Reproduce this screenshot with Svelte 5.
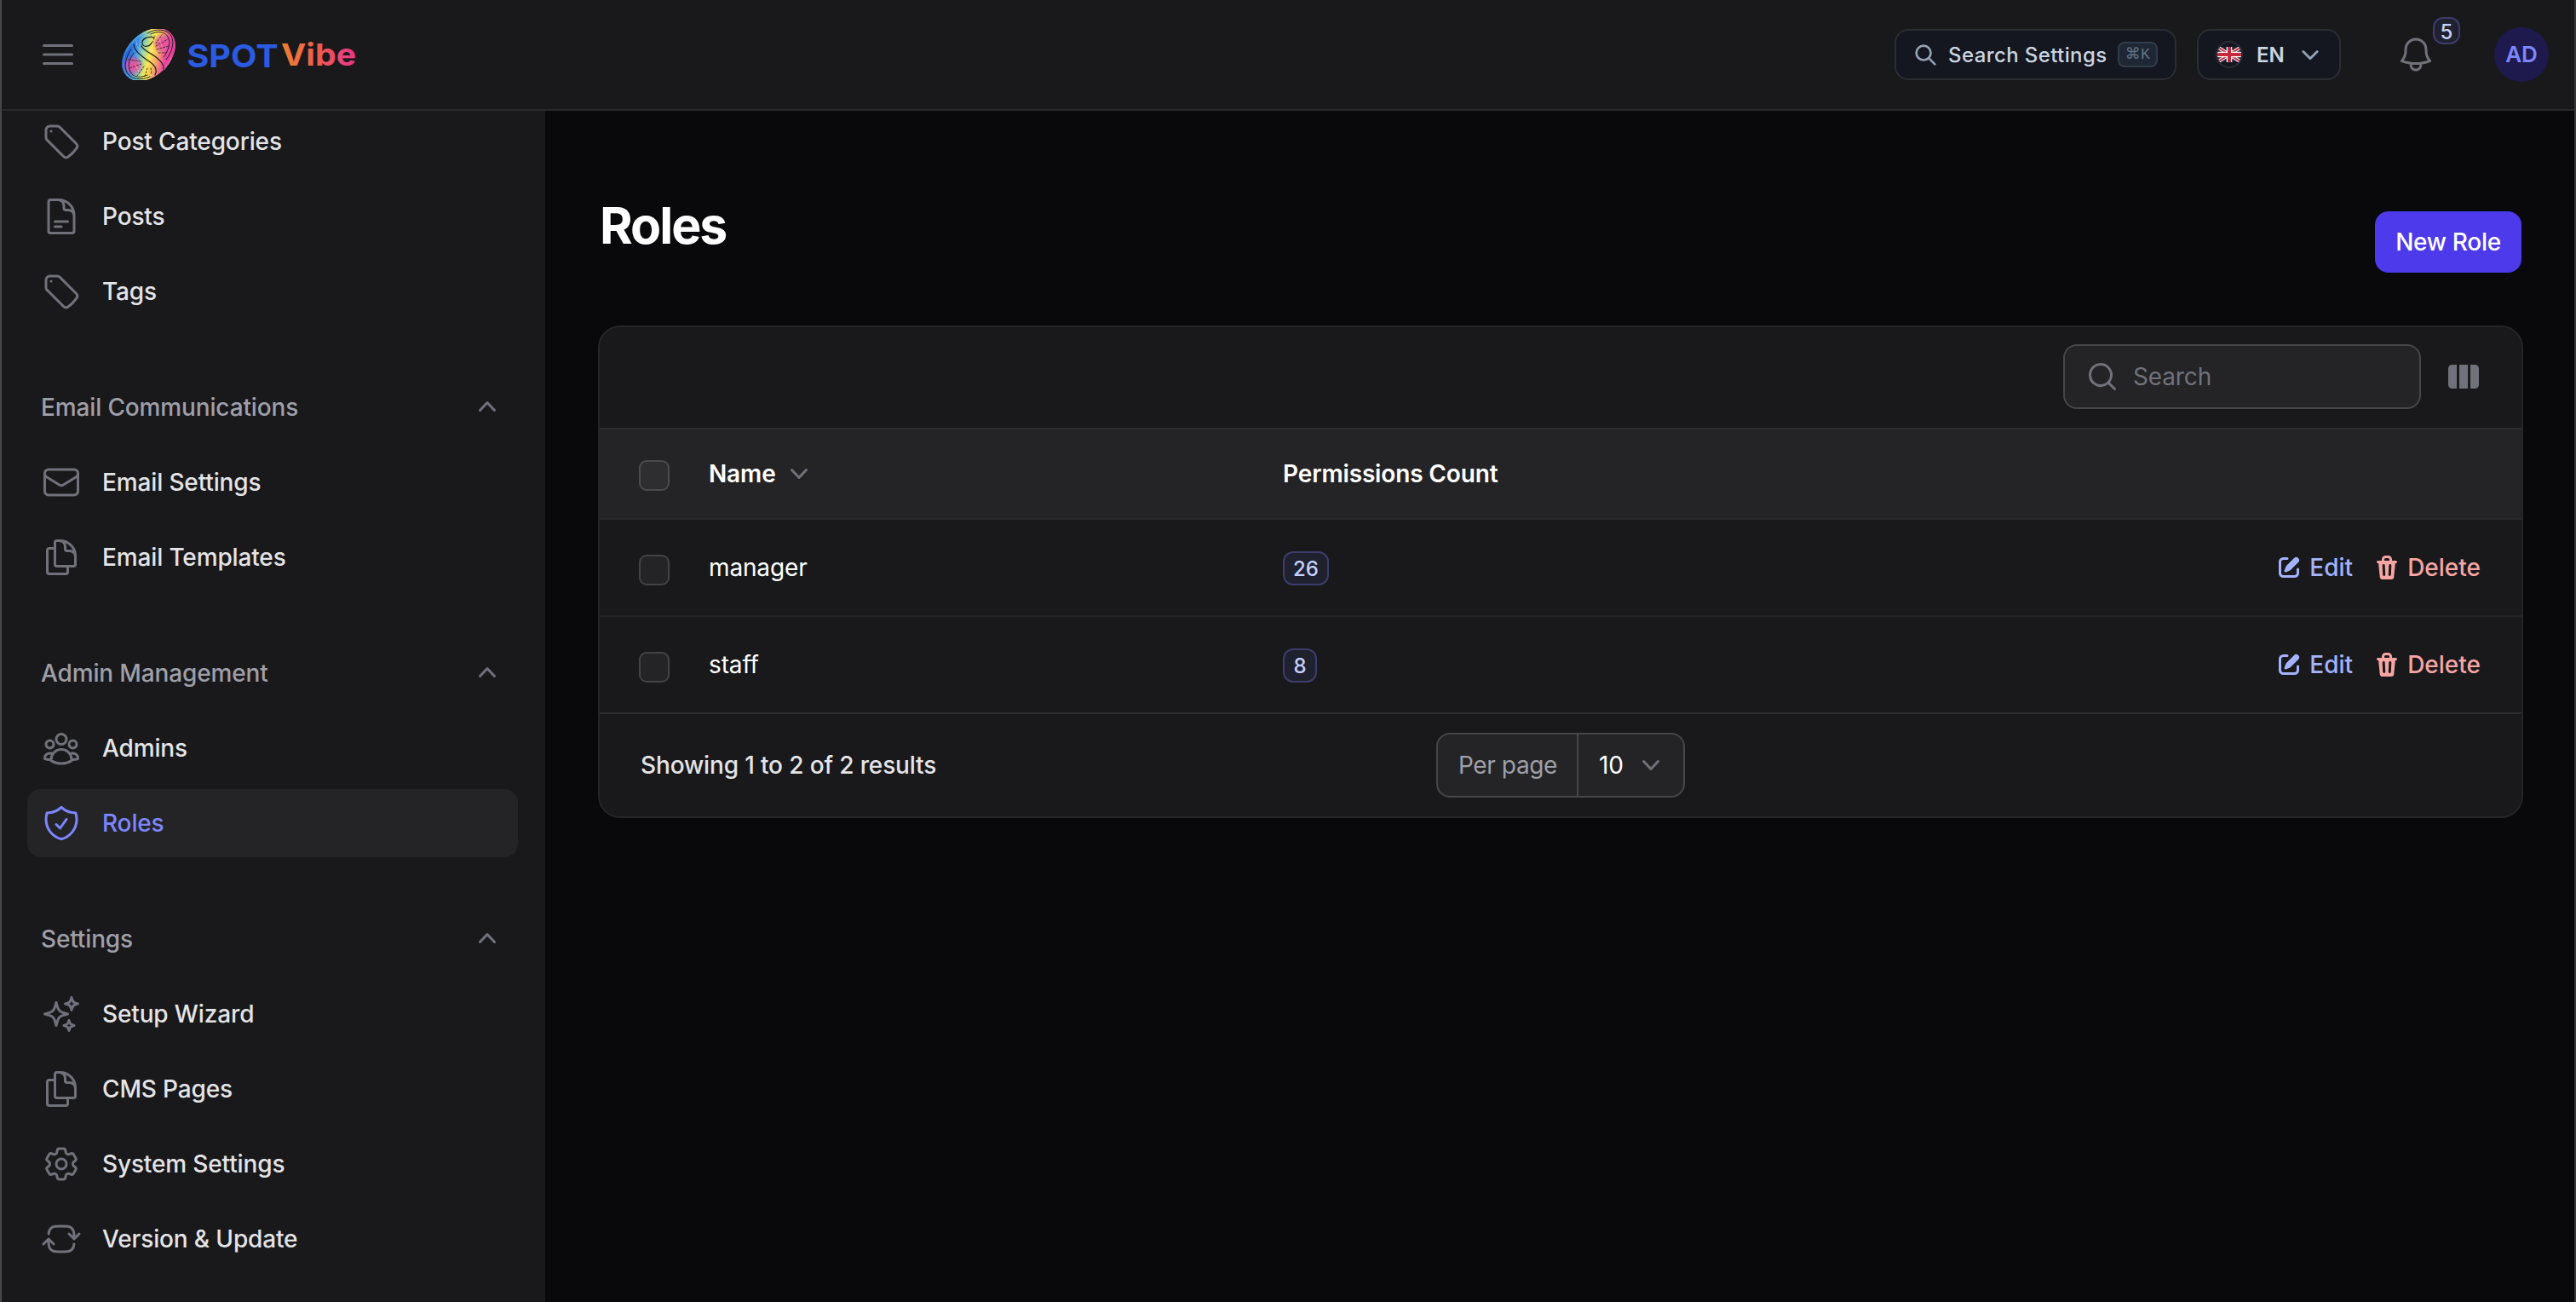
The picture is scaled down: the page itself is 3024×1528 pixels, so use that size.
<script lang="ts">
    const paths: Record<string, string[]> = {
        tag: [
            'M9.568 3H5.25A2.25 2.25 0 0 0 3 5.25v4.318c0 .597.237 1.17.659 1.591l9.581 9.581c.699.699 1.78.872 2.607.33a18.095 18.095 0 0 0 5.223-5.223c.542-.827.369-1.908-.33-2.607L11.16 3.66A2.25 2.25 0 0 0 9.568 3Z',
            'M6 6h.008v.008H6V6Z'
        ],
        document: [
            'M19.5 14.25v-2.625a3.375 3.375 0 0 0-3.375-3.375h-1.5A1.125 1.125 0 0 1 13.5 7.125v-1.5a3.375 3.375 0 0 0-3.375-3.375H8.25m0 12.75h7.5m-7.5 3H12M10.5 2.25H5.625c-.621 0-1.125.504-1.125 1.125v17.25c0 .621.504 1.125 1.125 1.125h12.75c.621 0 1.125-.504 1.125-1.125V11.25a9 9 0 0 0-9-9Z'
        ],
        envelope: [
            'M21.75 6.75v10.5a2.25 2.25 0 0 1-2.25 2.25h-15a2.25 2.25 0 0 1-2.25-2.25V6.75m19.5 0A2.25 2.25 0 0 0 19.5 4.5h-15a2.25 2.25 0 0 0-2.25 2.25m19.5 0v.243a2.25 2.25 0 0 1-1.07 1.916l-7.5 4.615a2.25 2.25 0 0 1-2.36 0L3.32 8.91a2.25 2.25 0 0 1-1.07-1.916V6.75'
        ],
        copy: [
            'M15.75 17.25v3.375c0 .621-.504 1.125-1.125 1.125h-9.75a1.125 1.125 0 0 1-1.125-1.125V7.875c0-.621.504-1.125 1.125-1.125H6.75a9.06 9.06 0 0 1 1.5.124m7.5 10.376h3.375c.621 0 1.125-.504 1.125-1.125V11.25c0-4.46-3.243-8.161-7.5-8.876a9.06 9.06 0 0 0-1.5-.124H9.375c-.621 0-1.125.504-1.125 1.125v3.5m7.5 10.375H9.375a1.125 1.125 0 0 1-1.125-1.125v-9.25m12 6.625v-1.875a3.375 3.375 0 0 0-3.375-3.375h-1.5a1.125 1.125 0 0 1-1.125-1.125v-1.5a3.375 3.375 0 0 0-3.375-3.375H9.75'
        ],
        users: [
            'M18 18.72a9.094 9.094 0 0 0 3.741-.479 3 3 0 0 0-4.682-2.72m.94 3.198.001.031c0 .225-.012.447-.037.666A11.944 11.944 0 0 1 12 21c-2.17 0-4.207-.576-5.963-1.584A6.062 6.062 0 0 1 6 18.719m12 0a5.971 5.971 0 0 0-.941-3.197m0 0A5.995 5.995 0 0 0 12 12.75a5.995 5.995 0 0 0-5.058 2.772m0 0a3 3 0 0 0-4.681 2.72 8.986 8.986 0 0 0 3.74.477m.94-3.197a5.971 5.971 0 0 0-.94 3.197M15 6.75a3 3 0 1 1-6 0 3 3 0 0 1 6 0Zm6 3a2.25 2.25 0 1 1-4.5 0 2.25 2.25 0 0 1 4.5 0Zm-13.5 0a2.25 2.25 0 1 1-4.5 0 2.25 2.25 0 0 1 4.5 0Z'
        ],
        shield: [
            'M9 12.75 11.25 15 15 9.75m-3-7.036A11.959 11.959 0 0 1 3.598 6 11.99 11.99 0 0 0 3 9.749c0 5.592 3.824 10.29 9 11.623 5.176-1.332 9-6.03 9-11.622 0-1.31-.21-2.571-.598-3.751h-.152c-3.196 0-6.1-1.248-8.25-3.285Z'
        ],
        sparkles: [
            'M9.813 15.904 9 18.75l-.813-2.846a4.5 4.5 0 0 0-3.09-3.09L2.25 12l2.846-.813a4.5 4.5 0 0 0 3.09-3.09L9 5.25l.813 2.846a4.5 4.5 0 0 0 3.09 3.09L15.75 12l-2.846.813a4.5 4.5 0 0 0-3.09 3.09ZM18.259 8.715 18 9.75l-.259-1.035a3.375 3.375 0 0 0-2.455-2.456L14.25 6l1.036-.259a3.375 3.375 0 0 0 2.455-2.456L18 2.25l.259 1.035a3.375 3.375 0 0 0 2.456 2.456L21.75 6l-1.035.259a3.375 3.375 0 0 0-2.456 2.456ZM16.894 20.567 16.5 21.75l-.394-1.183a2.25 2.25 0 0 0-1.423-1.423L13.5 18.75l1.183-.394a2.25 2.25 0 0 0 1.423-1.423l.394-1.183.394 1.183a2.25 2.25 0 0 0 1.423 1.423l1.183.394-1.183.394a2.25 2.25 0 0 0-1.423 1.423Z'
        ],
        cog: [
            'M9.594 3.94c.09-.542.56-.94 1.11-.94h2.593c.55 0 1.02.398 1.11.94l.213 1.281c.063.374.313.686.645.87.074.04.147.083.22.127.325.196.72.257 1.075.124l1.217-.456a1.125 1.125 0 0 1 1.37.49l1.296 2.247a1.125 1.125 0 0 1-.26 1.431l-1.003.827c-.293.241-.438.613-.43.992a7.723 7.723 0 0 1 0 .255c-.008.378.137.75.43.991l1.004.827c.424.35.534.955.26 1.43l-1.298 2.247a1.125 1.125 0 0 1-1.369.491l-1.217-.456c-.355-.133-.75-.072-1.076.124a6.47 6.47 0 0 1-.22.128c-.331.183-.581.495-.644.869l-.213 1.281c-.09.543-.56.94-1.11.94h-2.594c-.55 0-1.019-.398-1.11-.94l-.213-1.281c-.062-.374-.312-.686-.644-.87a6.52 6.52 0 0 1-.22-.127c-.325-.196-.72-.257-1.076-.124l-1.217.456a1.125 1.125 0 0 1-1.369-.49l-1.297-2.247a1.125 1.125 0 0 1 .26-1.431l1.004-.827c.292-.24.437-.613.43-.991a6.932 6.932 0 0 1 0-.255c.007-.38-.138-.751-.43-.992l-1.004-.827a1.125 1.125 0 0 1-.26-1.43l1.297-2.247a1.125 1.125 0 0 1 1.37-.491l1.216.456c.356.133.751.072 1.076-.124.072-.044.146-.086.22-.128.332-.183.582-.495.644-.869l.214-1.28Z',
            'M15 12a3 3 0 1 1-6 0 3 3 0 0 1 6 0Z'
        ],
        refresh: [
            'M19.5 12c0-1.232-.046-2.453-.138-3.662a4.006 4.006 0 0 0-3.7-3.7 48.678 48.678 0 0 0-7.324 0 4.006 4.006 0 0 0-3.7 3.7c-.017.22-.032.441-.046.662M19.5 12l3-3m-3 3-3-3m-12 3c0 1.232.046 2.453.138 3.662a4.006 4.006 0 0 0 3.7 3.7 48.656 48.656 0 0 0 7.324 0 4.006 4.006 0 0 0 3.7-3.7c.017-.22.032-.441.046-.662M4.5 12l3 3m-3-3-3 3'
        ],
        bars: ['M3.75 6.75h16.5M3.75 12h16.5m-16.5 5.25h16.5'],
        bell: [
            'M14.857 17.082a23.848 23.848 0 0 0 5.454-1.31A8.967 8.967 0 0 1 18 9.75V9A6 6 0 0 0 6 9v.75a8.967 8.967 0 0 1-2.312 6.022c1.733.64 3.56 1.085 5.455 1.31m5.714 0a24.255 24.255 0 0 1-5.714 0m5.714 0a3 3 0 1 1-5.714 0'
        ]
    };

    const groups = [
        {
            label: '',
            items: [
                { label: 'Post Categories', icon: 'tag' },
                { label: 'Posts', icon: 'document' },
                { label: 'Tags', icon: 'tag' }
            ]
        },
        {
            label: 'Email Communications',
            items: [
                { label: 'Email Settings', icon: 'envelope' },
                { label: 'Email Templates', icon: 'copy' }
            ]
        },
        {
            label: 'Admin Management',
            items: [
                { label: 'Admins', icon: 'users' },
                { label: 'Roles', icon: 'shield' }
            ]
        },
        {
            label: 'Settings',
            items: [
                { label: 'Setup Wizard', icon: 'sparkles' },
                { label: 'CMS Pages', icon: 'copy' },
                { label: 'System Settings', icon: 'cog' },
                { label: 'Version & Update', icon: 'refresh' }
            ]
        }
    ];

    const roles = [
        { name: 'manager', permissions: 26 },
        { name: 'staff', permissions: 8 }
    ];

    let active = $state('Roles');
    let search = $state('');
</script>

{#snippet icon(name: string)}
    <svg class="icon" viewBox="0 0 24 24" fill="none" stroke="currentColor" stroke-width="1.5" stroke-linecap="round" stroke-linejoin="round">
        {#each paths[name] as d}
            <path {d} />
        {/each}
    </svg>
{/snippet}

{#snippet chevron(up: boolean)}
    <svg class="chevron" class:up viewBox="0 0 20 20" fill="currentColor">
        <path d="M5.23 7.21a.75.75 0 0 1 1.06.02L10 11.168l3.71-3.938a.75.75 0 1 1 1.08 1.04l-4.25 4.5a.75.75 0 0 1-1.08 0l-4.25-4.5a.75.75 0 0 1 .02-1.06Z" />
    </svg>
{/snippet}

<div class="app">
    <header>
        <button class="menu">{@render icon('bars')}</button>
        <svg class="logo" viewBox="0 0 276 64">
            <defs>
                <linearGradient id="disc" gradientUnits="userSpaceOnUse" x1="16" y1="10" x2="46" y2="58">
                    <stop offset="0" stop-color="#2458d8" />
                    <stop offset=".2" stop-color="#3a8fe8" />
                    <stop offset=".34" stop-color="#8fd0b0" />
                    <stop offset=".5" stop-color="#fbe94e" />
                    <stop offset=".66" stop-color="#f6a765" />
                    <stop offset=".82" stop-color="#ee4a9c" />
                    <stop offset="1" stop-color="#e83a9c" />
                </linearGradient>
                <radialGradient id="pink">
                    <stop offset="0" stop-color="#ec4c9c" />
                    <stop offset=".5" stop-color="#e8569f" stop-opacity=".8" />
                    <stop offset="1" stop-color="#b04bb0" stop-opacity="0" />
                </radialGradient>
                <linearGradient id="rim" gradientUnits="userSpaceOnUse" x1="10" y1="6" x2="54" y2="58">
                    <stop offset="0" stop-color="#2f6fe0" />
                    <stop offset=".3" stop-color="#4fb0e0" />
                    <stop offset=".5" stop-color="#f2ea5c" />
                    <stop offset=".75" stop-color="#ee4fa0" />
                    <stop offset="1" stop-color="#e8389a" />
                </linearGradient>
                <linearGradient id="vibe" x1="0" y1="0" x2="1" y2="0">
                    <stop offset="0" stop-color="#f0802c" />
                    <stop offset=".5" stop-color="#ec5a52" />
                    <stop offset="1" stop-color="#e8358c" />
                </linearGradient>
                <clipPath id="cut"><rect width="64" height="60" y="2" /></clipPath>
            </defs>
            <g clip-path="url(#cut)">
                <ellipse cx="31.5" cy="32" rx="36" ry="25" fill="url(#disc)" transform="rotate(-44 31.5 32)" />
                <circle cx="48" cy="19" r="12" fill="url(#pink)" />
                <circle cx="13" cy="45" r="13" fill="url(#pink)" />
                <ellipse cx="31.5" cy="32" rx="35" ry="24" fill="none" stroke="url(#rim)" stroke-width="2" transform="rotate(-44 31.5 32)" />
                <g fill="none" stroke="#19191b" stroke-linecap="round">
                    <path d="M30 7C40 1 53 2 58 10c4 8 1 19-6 28M34 8c8-4 17-3 20 3 4 7 1 16-5 24" stroke-width=".9" />
                    <path d="M33 58C23 63 10 61 6 53 2 45 5 35 11 26M30 56c-8 4-17 3-20-4-4-7-1-15 4-22" stroke-width=".9" />
                    <path d="M38 12c-8-2-15 2-14 7 1 5 9 4 11-1" stroke-width="1.2" />
                    <path d="M14 20c1 8 8 13 15 18 8 5 14 10 10 18" stroke-width="1.2" />
                    <path d="M23 22c3 6 11 8 17 13 6 5 10 9 9 14" stroke-width="1.2" />
                    <path d="M40 22l14-8M41 26l14-4M43 30l9 0M40 19l7-10M36 18l3-8M22 40 8 38M23 43 9 48M26 46l-8 11M30 48l-3 9M34 48l1 7" stroke-width=".8" stroke-dasharray="2 2" />
                </g>
                <g fill="none" stroke="#fff" stroke-opacity=".45" stroke-linecap="round" stroke-width=".8">
                    <path d="M17 16c0 7 4 11 10 15M50 50c3-5 7-9 8-14M44 14l3 8M16 44l4 8M32 26c5 2 9 4 12 7" stroke-dasharray="5 2" />
                </g>
            </g>
            <text x="76.5" y="47" font-size="37" font-weight="700" fill="#2a5be0" textLength="107" lengthAdjust="spacingAndGlyphs">SPOT</text>
            <text x="187" y="45" font-size="36" font-weight="700" fill="url(#vibe)" textLength="88" lengthAdjust="spacingAndGlyphs">Vibe</text>
        </svg>

        <div class="tools">
            <button class="pill settings">
                <svg viewBox="0 0 24 24" fill="none" stroke="currentColor" stroke-width="2.2" stroke-linecap="round"><path d="m21 21-6-6m2-5a7 7 0 1 1-14 0 7 7 0 0 1 14 0Z" /></svg>
                <span>Search Settings</span>
                <kbd>⌘K</kbd>
            </button>
            <button class="pill lang">
                <i class="flag">
                    <svg viewBox="0 0 28 18">
                        <rect width="28" height="18" fill="#1c2036" />
                        <path d="M0 0 28 18M28 0 0 18" stroke="#fff" stroke-width="4" />
                        <path d="M0 0 28 18M28 0 0 18" stroke="#c8283c" stroke-width="2" />
                        <path d="M14 0v18M0 9h28" stroke="#fff" stroke-width="6.5" />
                        <path d="M14 0v18M0 9h28" stroke="#c8283c" stroke-width="4" />
                    </svg>
                </i>
                <span>EN</span>
                <svg class="caret" viewBox="0 0 24 24" fill="none" stroke="currentColor" stroke-width="2.4" stroke-linecap="round" stroke-linejoin="round"><path d="m19 9-7 7-7-7" /></svg>
            </button>
            <button class="bell">
                {@render icon('bell')}
                <span class="badge count">5</span>
            </button>
            <div class="avatar">AD</div>
        </div>
    </header>

    <div class="body">
        <aside>
            <nav>
                {#each groups as group}
                    <div class="group">
                        {#if group.label}
                            <div class="group-label">
                                <span>{group.label}</span>
                                {@render chevron(true)}
                            </div>
                        {/if}
                        {#each group.items as item}
                            <button class="item" class:active={active === item.label} onclick={() => (active = item.label)}>
                                {@render icon(item.icon)}
                                <span>{item.label}</span>
                            </button>
                        {/each}
                    </div>
                {/each}
            </nav>
        </aside>

        <main>
            <div class="heading">
                <h1>Roles</h1>
                <button class="new">New Role</button>
            </div>

            <section class="card">
                <div class="toolbar">
                    <label class="search">
                        <svg viewBox="0 0 20 20" fill="currentColor"><path fill-rule="evenodd" d="M9 3.5a5.5 5.5 0 1 0 0 11 5.5 5.5 0 0 0 0-11ZM2 9a7 7 0 1 1 12.452 4.391l3.328 3.329a.75.75 0 1 1-1.06 1.06l-3.329-3.328A7 7 0 0 1 2 9Z" /></svg>
                        <input placeholder="Search" bind:value={search} />
                    </label>
                    <button class="columns" aria-label="Columns">
                        <svg viewBox="0 0 20 20" fill="currentColor"><path d="M14 17h2.75A2.25 2.25 0 0 0 19 14.75v-9.5A2.25 2.25 0 0 0 16.75 3H14v14ZM12.5 3h-5v14h5V3ZM3.25 3H6v14H3.25A2.25 2.25 0 0 1 1 14.75v-9.5A2.25 2.25 0 0 1 3.25 3Z" /></svg>
                    </button>
                </div>

                <div class="row head">
                    <i class="check"></i>
                    <div class="name">Name {@render chevron(false)}</div>
                    <div>Permissions Count</div>
                </div>
                {#each roles as role}
                    <div class="row">
                        <i class="check"></i>
                        <div>{role.name}</div>
                        <div><span class="badge">{role.permissions}</span></div>
                        <div class="actions">
                            <button class="edit">
                                <svg viewBox="0 0 16 16" fill="currentColor">
                                    <path d="M13.488 2.513a1.75 1.75 0 0 0-2.475 0L6.75 6.774a2.75 2.75 0 0 0-.596.892l-.848 2.047a.75.75 0 0 0 .98.98l2.047-.848a2.75 2.75 0 0 0 .892-.596l4.261-4.262a1.75 1.75 0 0 0 0-2.474Z" />
                                    <path d="M4.75 3.5c-.69 0-1.25.56-1.25 1.25v6.5c0 .69.56 1.25 1.25 1.25h6.5c.69 0 1.25-.56 1.25-1.25V9A.75.75 0 0 1 14 9v2.25A2.75 2.75 0 0 1 11.25 14h-6.5A2.75 2.75 0 0 1 2 11.25v-6.5A2.75 2.75 0 0 1 4.75 2H7a.75.75 0 0 1 0 1.5H4.75Z" />
                                </svg>
                                <span>Edit</span>
                            </button>
                            <button class="delete">
                                <svg viewBox="0 0 16 16" fill="currentColor">
                                    <path fill-rule="evenodd" d="M5 3.25V4H2.75a.75.75 0 0 0 0 1.5h.3l.815 8.15A1.5 1.5 0 0 0 5.357 15h5.285a1.5 1.5 0 0 0 1.493-1.35l.815-8.15h.3a.75.75 0 0 0 0-1.5H11v-.75A2.25 2.25 0 0 0 8.75 1h-1.5A2.25 2.25 0 0 0 5 3.25Zm2.25-.75a.75.75 0 0 0-.75.75V4h3v-.75a.75.75 0 0 0-.75-.75h-1.5ZM6.05 6a.75.75 0 0 1 .787.713l.275 5.5a.75.75 0 0 1-1.498.075l-.275-5.5A.75.75 0 0 1 6.05 6Zm3.9 0a.75.75 0 0 1 .712.787l-.275 5.5a.75.75 0 0 1-1.498-.075l.275-5.5a.75.75 0 0 1 .786-.711Z" />
                                </svg>
                                <span>Delete</span>
                            </button>
                        </div>
                    </div>
                {/each}

                <div class="footer">
                    <span>Showing 1 to 2 of 2 results</span>
                    <div class="per-page">
                        <span class="prefix">Per page</span>
                        <span class="value">10 {@render chevron(false)}</span>
                    </div>
                </div>
            </section>
        </main>
    </div>
</div>

<style>
    :global(body) {
        background: #09090b;
    }
    .app {
        box-sizing: border-box;
        width: 3024px;
        height: 1528px;
        overflow: hidden;
        display: flex;
        flex-direction: column;
        border-left: 2px solid #464649;
        border-right: 2px solid #363639;
        font-family: Inter, 'Liberation Sans', sans-serif;
        font-size: 28px;
        line-height: 40px;
        letter-spacing: -0.14px;
        color: #fff;
        background: #09090b;
    }
    button {
        margin: 0;
        padding: 0;
        border: none;
        background: none;
        font: inherit;
        letter-spacing: inherit;
        color: inherit;
        cursor: pointer;
    }
    svg {
        display: block;
        flex: none;
    }
    .icon {
        width: 48px;
        height: 48px;
    }
    .chevron {
        width: 40px;
        height: 40px;
        color: #71717b;
    }
    .chevron.up {
        margin-bottom: 3px;
        transform: rotate(180deg);
    }

    header {
        position: relative;
        z-index: 1;
        box-sizing: border-box;
        height: 130px;
        flex: none;
        display: flex;
        align-items: center;
        padding: 0 30px 0 42px;
        border-bottom: 2px solid #29292c;
        background: #19191b;
    }
    .menu {
        color: #71717b;
    }
    .logo {
        width: 276px;
        height: 64px;
        margin-left: 51px;
        overflow: visible;
        letter-spacing: 0;
    }
    .tools {
        display: flex;
        align-items: center;
        margin-left: auto;
    }
    .pill {
        box-sizing: border-box;
        height: 60px;
        display: flex;
        align-items: center;
        border: 2px solid #2b2d33;
        border-radius: 16px;
        background: #14171f;
        color: #cbd5e1;
        font-size: 24px;
        font-weight: 500;
        letter-spacing: 0.4px;
    }
    .settings {
        width: 331px;
        margin-right: 24px;
        padding: 0 20px;
    }
    .settings svg {
        width: 29px;
        height: 29px;
        color: #94a3b8;
    }
    .settings span {
        margin-left: 12px;
        padding-top: 1px;
    }
    kbd {
        box-sizing: border-box;
        width: 47px;
        height: 30px;
        margin-left: auto;
        border: 2px solid #303c4b;
        border-radius: 8px;
        background: #1e2733;
        color: #64748b;
        font: 500 18px/26px 'Liberation Mono', 'DejaVu Sans', monospace;
        text-align: center;
    }
    .lang {
        width: 169px;
        padding-left: 20px;
    }
    .lang span {
        margin-left: 16px;
        padding-top: 1px;
        font-weight: 600;
        letter-spacing: 0;
    }
    .flag {
        box-sizing: border-box;
        width: 32px;
        height: 32px;
        display: flex;
        align-items: center;
        justify-content: center;
        border: 2px solid #2b2d33;
        border-radius: 50%;
        overflow: hidden;
    }
    .flag svg {
        width: 28px;
        height: 18px;
    }
    .caret {
        width: 28px;
        height: 28px;
        margin-left: 16px;
        color: #94a3b8;
    }
    .bell {
        position: relative;
        margin-left: 64px;
        color: #71717b;
    }
    .badge {
        box-sizing: border-box;
        display: inline-block;
        min-width: 40px;
        height: 40px;
        padding: 0 10px;
        border: 2px solid #3d3c6c;
        border-radius: 12px;
        background: #20212e;
        color: #c6d2ff;
        font-size: 24px;
        font-weight: 500;
        line-height: 38px;
        letter-spacing: 0;
        text-align: center;
        vertical-align: top;
    }
    .count {
        position: absolute;
        left: 44px;
        top: -20px;
        min-width: 32px;
        height: 32px;
        padding: 0 6px;
        line-height: 31px;
    }
    .avatar {
        width: 64px;
        height: 64px;
        margin-left: 68px;
        border-radius: 50%;
        background: #1e1a4d;
        color: #7c86ff;
        font-size: 26px;
        font-weight: 600;
        line-height: 64px;
        text-align: center;
    }

    .body {
        flex: 1;
        min-height: 0;
        display: flex;
    }
    aside {
        width: 638px;
        flex: none;
        background: #19191b;
    }
    nav {
        display: flex;
        flex-direction: column;
        gap: 56px;
        margin-top: -4px;
        padding: 0 32px 0 30px;
    }
    .group {
        display: flex;
        flex-direction: column;
        gap: 8px;
    }
    .group-label,
    .item {
        height: 80px;
        display: flex;
        align-items: center;
        padding: 0 16px;
        font-weight: 500;
    }
    .group-label {
        justify-content: space-between;
        color: #9f9fa9;
    }
    .item {
        gap: 24px;
        border-radius: 16px;
        color: #e4e4e7;
    }
    .item .icon {
        color: #71717b;
    }
    .item.active {
        background: #242426;
    }
    .item.active,
    .item.active .icon {
        color: #7c86ff;
    }

    main {
        flex: 1;
        padding: 98px 60px 0 62px;
    }
    .heading {
        display: flex;
        justify-content: space-between;
        padding: 0 2px;
    }
    h1 {
        margin: 0;
        font-size: 59px;
        font-weight: 700;
        line-height: 74px;
        letter-spacing: -0.034em;
    }
    .new {
        width: 172px;
        height: 72px;
        margin-top: 20px;
        border-radius: 16px;
        background: #4c3aeb;
        font-weight: 500;
        letter-spacing: -0.3px;
    }

    .card {
        margin-top: 62px;
        border: 2px solid #252528;
        border-radius: 26px;
        background: #19191b;
        overflow: hidden;
    }
    .toolbar {
        height: 116px;
        display: flex;
        align-items: center;
        justify-content: flex-end;
        gap: 30px;
        padding: 0 48px 2px 0;
        border-bottom: 2px solid #2e2e30;
    }
    .search {
        box-sizing: border-box;
        width: 420px;
        height: 76px;
        display: flex;
        align-items: center;
        gap: 16px;
        padding: 0 24px;
        border: 2px solid #464649;
        border-radius: 16px;
        background: #242426;
        color: #71717b;
    }
    .search svg,
    .columns svg {
        width: 40px;
        height: 40px;
    }
    .search input {
        width: 100%;
        min-width: 0;
        padding: 0;
        border: none;
        outline: none;
        background: none;
        font: inherit;
        letter-spacing: inherit;
        color: #fff;
    }
    .search input::placeholder {
        color: #71717b;
        opacity: 1;
    }
    .columns {
        color: #71717b;
    }

    .row {
        height: 112px;
        display: grid;
        grid-template-columns: 82px 674px 1fr auto;
        align-items: center;
        padding: 0 48px 0 46px;
        border-bottom: 2px solid #242426;
        box-sizing: border-box;
        height: 114px;
    }
    .row:nth-last-child(2) {
        border-color: #2e2e30;
    }
    .row.head {
        height: 106px;
        background: #242426;
        border-color: #2b2b2d;
        font-weight: 600;
    }
    .check {
        box-sizing: border-box;
        width: 36px;
        height: 36px;
        margin-top: 6px;
        border: 2px solid #434346;
        border-radius: 9px;
        background: #242426;
    }
    .head .check {
        margin-top: 4px;
        background: #2e2e30;
        border-color: #4b4b4e;
    }
    .name {
        display: flex;
        align-items: center;
        gap: 7px;
    }
    .row .badge {
        margin-top: 2px;
    }
    .actions {
        display: flex;
        gap: 24px;
        font-weight: 500;
        letter-spacing: 0;
    }
    .actions button {
        display: flex;
        align-items: center;
        gap: 8px;
    }
    .actions svg {
        width: 32px;
        height: 32px;
    }
    .edit {
        color: #a3b3ff;
    }
    .delete {
        color: #f6a5a3;
    }

    .footer {
        height: 120px;
        display: grid;
        grid-template-columns: 1fr auto 1fr;
        align-items: center;
        padding: 0 48px;
        color: #e4e4e7;
        font-weight: 500;
    }
    .per-page {
        box-sizing: border-box;
        width: 292px;
        height: 76px;
        display: flex;
        border: 2px solid #464649;
        border-radius: 16px;
        background: #242426;
        font-weight: 400;
        line-height: 72px;
    }
    .prefix {
        width: 165px;
        padding-left: 24px;
        box-sizing: border-box;
        border-right: 2px solid #464649;
        color: #9f9fa9;
        letter-spacing: -0.4px;
    }
    .value {
        display: flex;
        align-items: center;
        gap: 12px;
        padding-left: 24px;
        color: #fff;
    }
</style>
